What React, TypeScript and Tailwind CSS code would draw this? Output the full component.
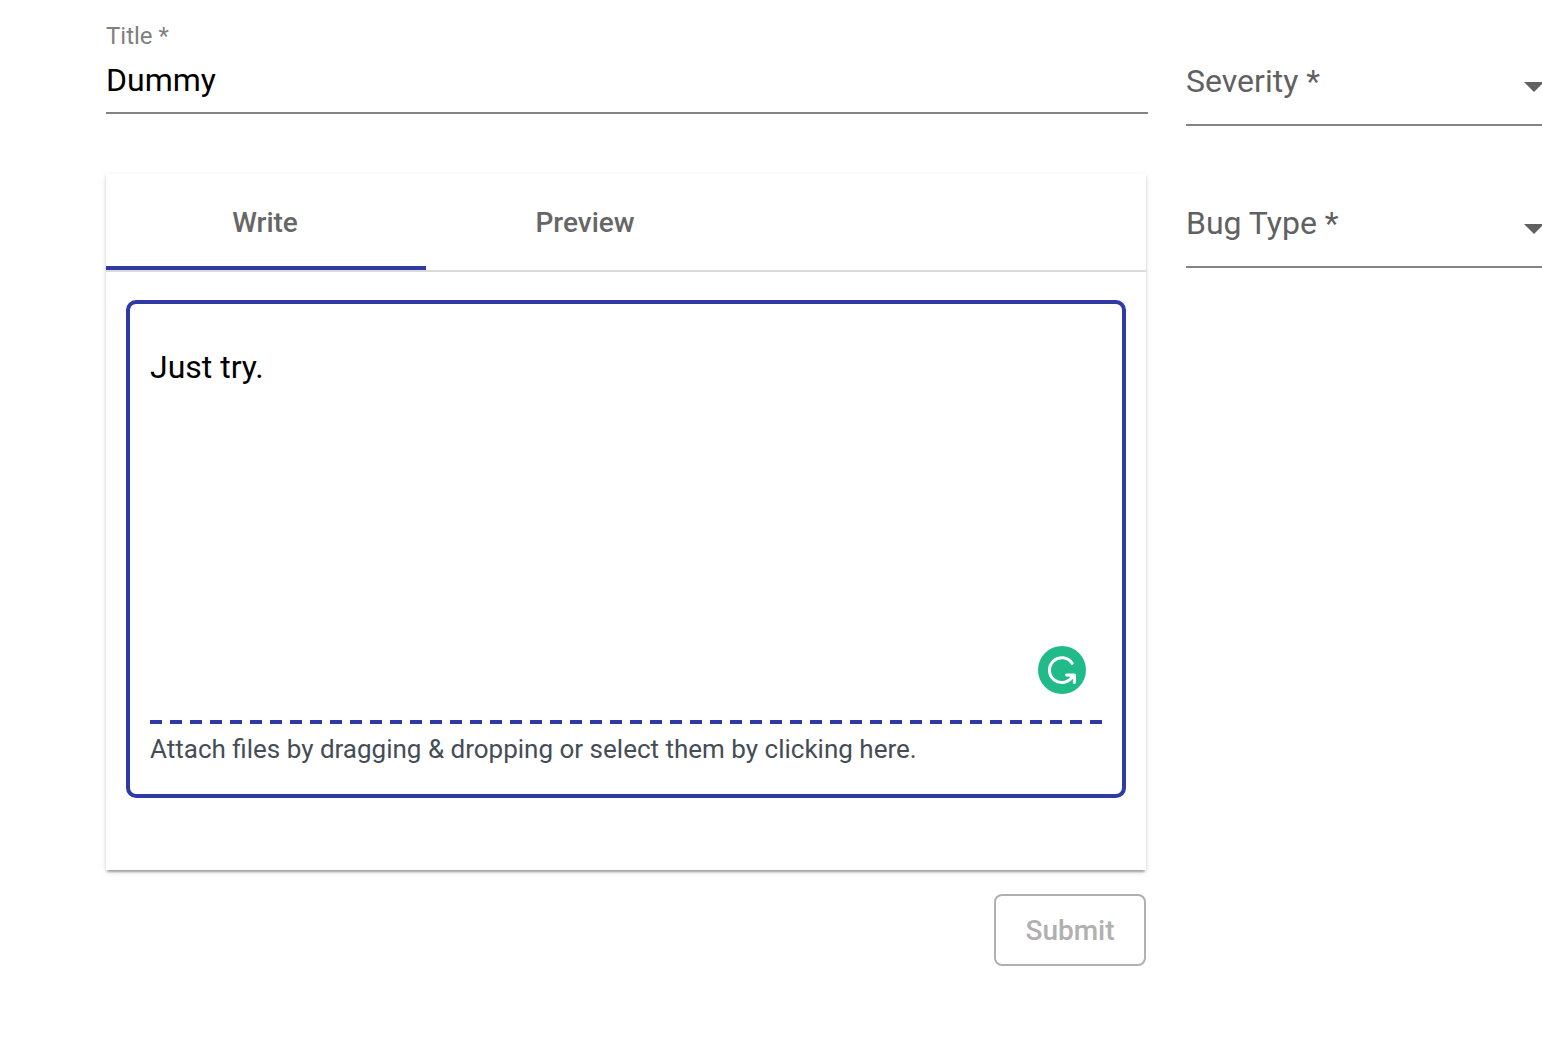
import { useState } from "react";

function SelectField({ id, label, options }: { id: string; label: string; options: string[] }) {
  return (
    <div className="relative border-b-2 border-[#838383] pb-[23px]">
      <select
        id={id}
        aria-label={label}
        required
        defaultValue=""
        className="block h-10 w-full appearance-none bg-transparent pr-8 text-[32px] leading-10 text-[#616161] outline-none"
      >
        <option value="">{label} *</option>
        {options.map((option) => (
          <option key={option}>{option}</option>
        ))}
      </select>
      <svg
        aria-hidden="true"
        viewBox="0 0 20 10"
        className="pointer-events-none absolute top-[21px] -right-0.5 h-2.5 w-5 fill-[#616161]"
      >
        <path d="M0 0H20L10 10Z" />
      </svg>
    </div>
  );
}

function AssistantIcon() {
  return (
    <svg viewBox="0 0 48 48" aria-hidden="true" className="size-12">
      <circle cx="24" cy="24" r="24" fill="#20bb88" />
      <g fill="none" stroke="#fff" strokeWidth="3" strokeLinecap="round" strokeLinejoin="round">
        <path d="M34.2 17.3A12.4 12.4 0 1 0 34.8 30" />
        <path d="M28.6 29.1H36.4V36.6" />
      </g>
      <path d="M30.5 29H37V35.5L34.8 33L32.5 32Z" fill="#fff" />
    </svg>
  );
}

const tabs = ["Write", "Preview"];

export default function App() {
  const [active, setActive] = useState("Write");
  const [title, setTitle] = useState("Dummy");
  const [text, setText] = useState("Just try.");

  return (
    <main className="min-h-screen overflow-hidden bg-white font-['Roboto',sans-serif]">
      <form
        className="grid grid-cols-[minmax(0,1fr)_356px] gap-x-[38px] pt-[22px] pb-10 pl-[106px]"
        onSubmit={(e) => e.preventDefault()}
      >
        <div>
          <div className="border-b-2 border-[#838383] pb-3">
            <label htmlFor="title" className="block h-7 text-2xl leading-7 text-[#808080]">
              Title *
            </label>
            <input
              id="title"
              required
              value={title}
              onChange={(e) => setTitle(e.target.value)}
              className="mt-2.5 block h-10 w-full bg-transparent text-[32px] leading-10 text-black outline-none"
            />
          </div>

          <div className="mr-0.5">
            <section className="mt-[60px] bg-white pb-[72px] shadow-[0_4px_2px_-2px_rgba(0,0,0,0.2),0_2px_2px_0_rgba(0,0,0,0.14),0_2px_6px_0_rgba(0,0,0,0.12)]">
              <div role="tablist" className="flex border-b-2 border-[#dadada]">
                {tabs.map((tab) => (
                  <button
                    key={tab}
                    type="button"
                    role="tab"
                    aria-selected={active === tab}
                    onClick={() => setActive(tab)}
                    className="h-24 w-80 border-b-4 border-transparent pt-1.5 pr-0.5 text-[28px] leading-8 font-medium text-[#666666] aria-selected:border-[#303aa6]"
                  >
                    {tab}
                  </button>
                ))}
              </div>

              <div className="mx-5 mt-7 rounded-[10px] border-4 border-[#303aa6] px-5 pb-5">
                <div className="relative">
                  <textarea
                    aria-label="Description"
                    value={text}
                    onChange={(e) => setText(e.target.value)}
                    className="block h-[416px] w-full resize-none bg-transparent pt-[43px] text-[32px] leading-10 text-black outline-none"
                  />
                  <button type="button" aria-label="Writing assistant" className="absolute right-4 bottom-[26px]">
                    <AssistantIcon />
                  </button>
                </div>
                <div className="h-1 bg-[repeating-linear-gradient(to_right,#303aa6_0_12px,transparent_12px_20px)]" />
                <button
                  type="button"
                  className="mt-[5px] mb-[5px] block h-10 w-full text-left text-[26px] leading-8 text-[#444d56]"
                >
                  Attach files by dragging &amp; dropping or select them by clicking here.
                </button>
              </div>
            </section>

            <div className="mt-6 flex justify-end">
              <button
                type="submit"
                disabled
                className="h-[72px] w-[152px] rounded-lg border-2 border-[#b0b0b0] pt-0.5 text-[28px] leading-8 font-medium text-[#b0b0b0]"
              >
                Submit
              </button>
            </div>
          </div>
        </div>

        <div className="flex flex-col gap-[77px] pt-[39px]">
          <SelectField id="severity" label="Severity" options={["Low", "Medium", "High"]} />
          <SelectField id="bug-type" label="Bug Type" options={["Functional", "Visual", "Performance"]} />
        </div>
      </form>
    </main>
  );
}
